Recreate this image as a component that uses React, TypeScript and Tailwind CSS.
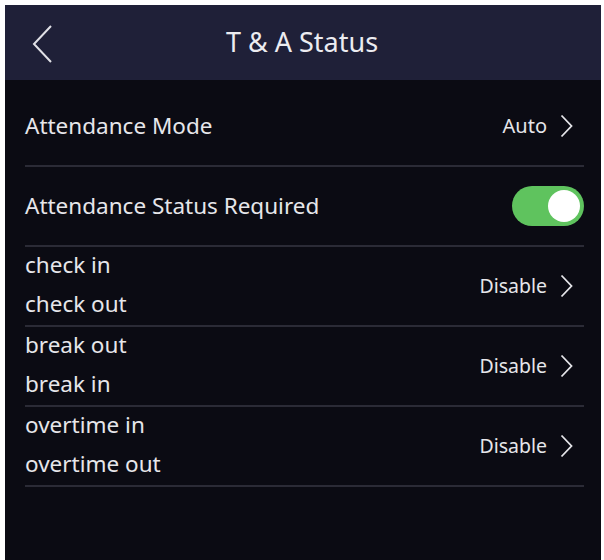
import React, { useState } from 'react';

const font = { fontFamily: '"Noto Sans", "Open Sans", sans-serif' };

const Chevron = ({ className = '' }: { className?: string }) => (
  <svg viewBox="0 0 13 24" className={className} fill="none" stroke="currentColor" strokeWidth={1.8}>
    <path d="M1.5 1.5 L11.5 12 L1.5 22.5" />
  </svg>
);

const Divider = () => <div className="ml-[20px] mr-[17px] h-[2px] bg-[#2b2b36]" />;

interface ValueRowProps {
  lines: string[];
  value: string;
}

const ValueRow: React.FC<ValueRowProps> = ({ lines, value }) => (
  <div className="flex h-[78px] items-center justify-between px-[20px]">
    <div className="flex flex-col gap-[9px] pb-[4px]">
      {lines.map((l) => (
        <span key={l} className="text-[22.5px] leading-[30px] text-[#e6e6ea]">
          {l}
        </span>
      ))}
    </div>
    <div className="flex items-center gap-[13px] pr-[8px]">
      <span className="text-[19.5px] text-[#e6e6ea]">{value}</span>
      <Chevron className="h-[24px] w-[13px] text-[#e6e6ea]" />
    </div>
  </div>
);

export default function App() {
  const [required, setRequired] = useState(true);

  return (
    <div className="h-[560px] w-[604px] overflow-hidden bg-white pl-[5px] pr-[3px] pt-[5px]" style={font}>
      <div className="flex h-full flex-col bg-[#0b0b13]">
        {/* Header */}
        <div className="relative flex h-[75px] shrink-0 items-center justify-center bg-[#1f2038]">
          <button className="absolute left-[26px] top-[19px] text-[#e0e0e6]">
            <svg viewBox="0 0 22 40" className="h-[40px] w-[22px]" fill="none" stroke="currentColor" strokeWidth={2}>
              <path d="M20 2 L3 20 L20 38" />
            </svg>
          </button>
          <span className="pr-[2px] text-[27px] text-[#ececf0]">T &amp; A Status</span>
        </div>

        <div className="pt-[6px]">
          {/* Attendance Mode */}
          <div className="flex h-[79px] items-center justify-between px-[20px]">
            <span className="text-[22.5px] text-[#e6e6ea]">Attendance Mode</span>
            <div className="flex items-center gap-[13px] pr-[8px]">
              <span className="text-[20px] text-[#e6e6ea]">Auto</span>
              <Chevron className="h-[24px] w-[13px] text-[#e6e6ea]" />
            </div>
          </div>
          <Divider />

          {/* Attendance Status Required */}
          <div className="flex h-[78px] items-center justify-between pl-[20px] pr-[17px]">
            <span className="text-[22.5px] text-[#e6e6ea]">Attendance Status Required</span>
            <button
              onClick={() => setRequired(!required)}
              className={`relative h-[40px] w-[72px] rounded-full ${required ? 'bg-[#5fc35e]' : 'bg-[#555]'}`}
            >
              <div
                className={`absolute top-[4px] h-[32px] w-[32px] rounded-full bg-white ${required ? 'right-[4px]' : 'left-[4px]'}`}
              />
            </button>
          </div>
          <Divider />

          <ValueRow lines={['check in', 'check out']} value="Disable" />
          <Divider />
          <ValueRow lines={['break out', 'break in']} value="Disable" />
          <Divider />
          <ValueRow lines={['overtime in', 'overtime out']} value="Disable" />
          <Divider />
        </div>
      </div>
    </div>
  );
}
